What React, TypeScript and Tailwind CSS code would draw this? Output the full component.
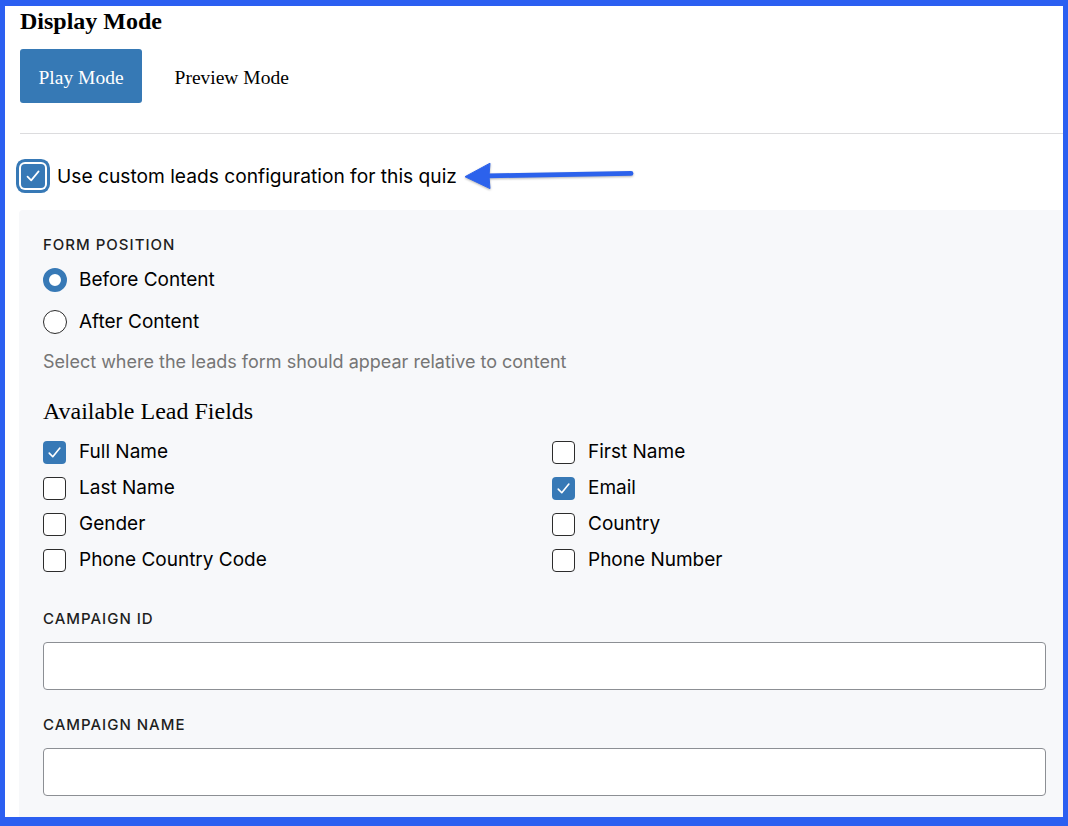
import React from "react";

const sans = "font-['Inter','Liberation_Sans',sans-serif]";
const serif = "font-['Liberation_Serif','Times_New_Roman',serif]";

function Check({ on }: { on: boolean }) {
  return on ? (
    <span className="flex h-[23px] w-[23px] shrink-0 items-center justify-center rounded-[4px] bg-[#3779b6]">
      <svg width="23" height="23" viewBox="0 0 24 24" fill="none">
        <path d="M6.5 12.6 L10.2 16.4 L17.6 7.4" stroke="#fff" strokeWidth="1.7" strokeLinecap="round" strokeLinejoin="round" />
      </svg>
    </span>
  ) : (
    <span className="h-[23px] w-[23px] shrink-0 rounded-[4px] border border-[#2c2c2c] bg-white" />
  );
}

function Radio({ on }: { on: boolean }) {
  return on ? (
    <span className="h-[24px] w-[24px] shrink-0 rounded-full border-[6px] border-[#3779b6] bg-white" />
  ) : (
    <span className="h-[24px] w-[24px] shrink-0 rounded-full border border-[#2c2c2c] bg-white" />
  );
}

const fields: [string, boolean][] = [
  ["Full Name", true],
  ["First Name", false],
  ["Last Name", false],
  ["Email", true],
  ["Gender", false],
  ["Country", false],
  ["Phone Country Code", false],
  ["Phone Number", false],
];

function Label({ children }: { children: React.ReactNode }) {
  return (
    <div className={`${sans} text-[15px] leading-[20px] font-medium uppercase tracking-[1px] text-[#1e1e1e]`}>
      {children}
    </div>
  );
}

export default function App() {
  return (
    <div className="relative h-[826px] w-[1068px] overflow-hidden border-b-[9px] border-l-[5px] border-r-[5px] border-t-[6px] border-[#2b5ff1] bg-white text-[#1e1e1e]">
      <div className="pl-[15px]">
        <h2 className={`${serif} pt-[1px] text-[24px] font-bold leading-[28px] text-black`}>Display Mode</h2>
        <div className="mt-[14px] flex items-center gap-[14px]">
          <button className={`${serif} h-[54px] rounded-[3px] bg-[#3679b5] px-[18.5px] pt-[3px] text-[19.5px] text-white`}>
            Play Mode
          </button>
          <button className={`${serif} h-[54px] px-[18.5px] pt-[3px] text-[19.5px] text-black`}>Preview Mode</button>
        </div>
        <div className="mt-[30px] border-t border-[#dcdcde]" />

        <label className="mt-[25px] flex h-[34px] items-center gap-[12px] pl-[1px]">
          <span className="flex h-[24px] w-[24px] items-center justify-center rounded-[4px] bg-[#3779b6] shadow-[0_0_0_2px_#fff,0_0_0_5px_#3779b6]">
            <svg width="24" height="24" viewBox="0 0 24 24" fill="none">
              <path d="M6.5 12.6 L10.2 16.4 L17.6 7.4" stroke="#fff" strokeWidth="1.7" strokeLinecap="round" strokeLinejoin="round" />
            </svg>
          </span>
          <span className={`${sans} pt-[1px] text-[19.2px] text-black`}>Use custom leads configuration for this quiz</span>
        </label>

        <div className="ml-[-1px] mt-[17px] rounded-tl-[4px] bg-[#f7f8fa] pb-[40px] pl-[24px] pr-[17px] pt-[25px]">
          <Label>Form Position</Label>
          <div className={`${sans} mt-[13px] flex h-[24px] items-center gap-[12px] text-[19px] text-black`}>
            <Radio on={true} />
            <span className="pt-[1px]">Before Content</span>
          </div>
          <div className={`${sans} mt-[18px] flex h-[24px] items-center gap-[12px] text-[19px] text-black`}>
            <Radio on={false} />
            <span className="pt-[1px]">After Content</span>
          </div>
          <p className={`${sans} mt-[16px] text-[18px] leading-[24px] text-[#757575]`}>
            Select where the leads form should appear relative to content
          </p>
          <h3 className={`${serif} mt-[22px] text-[24px] leading-[30px] text-black`}>Available Lead Fields</h3>
          <div className="mt-[14px] grid grid-cols-[509px_1fr] gap-y-[12px]">
            {fields.map(([name, on]) => (
              <div key={name} className={`${sans} flex h-[24px] items-center gap-[13px] text-[19px] text-black`}>
                <Check on={on} />
                <span className="pt-[1px]">{name}</span>
              </div>
            ))}
          </div>

          <div className="mt-[37px]">
            <Label>Campaign ID</Label>
          </div>
          <input className="mt-[13px] block h-[48px] w-full rounded-[4px] border border-[#8c8f94] bg-white" />
          <div className="mt-[25px]">
            <Label>Campaign Name</Label>
          </div>
          <input className="mt-[13px] block h-[48px] w-full rounded-[4px] border border-[#8c8f94] bg-white" />
        </div>
      </div>

      <svg
        className="pointer-events-none absolute left-[455px] top-[152px] drop-shadow-[0_1px_1px_rgba(0,0,0,0.3)]"
        width="176"
        height="34"
        viewBox="0 0 176 34"
      >
        <line x1="27" y1="17.9" x2="171" y2="15.4" stroke="#2c62ec" strokeWidth="4.8" strokeLinecap="round" />
        <path d="M5 18.7 L30 5.2 L29 18 L30 30.6 Z" fill="#2c62ec" strokeLinejoin="round" stroke="#2c62ec" strokeWidth="1" />
      </svg>
    </div>
  );
}
